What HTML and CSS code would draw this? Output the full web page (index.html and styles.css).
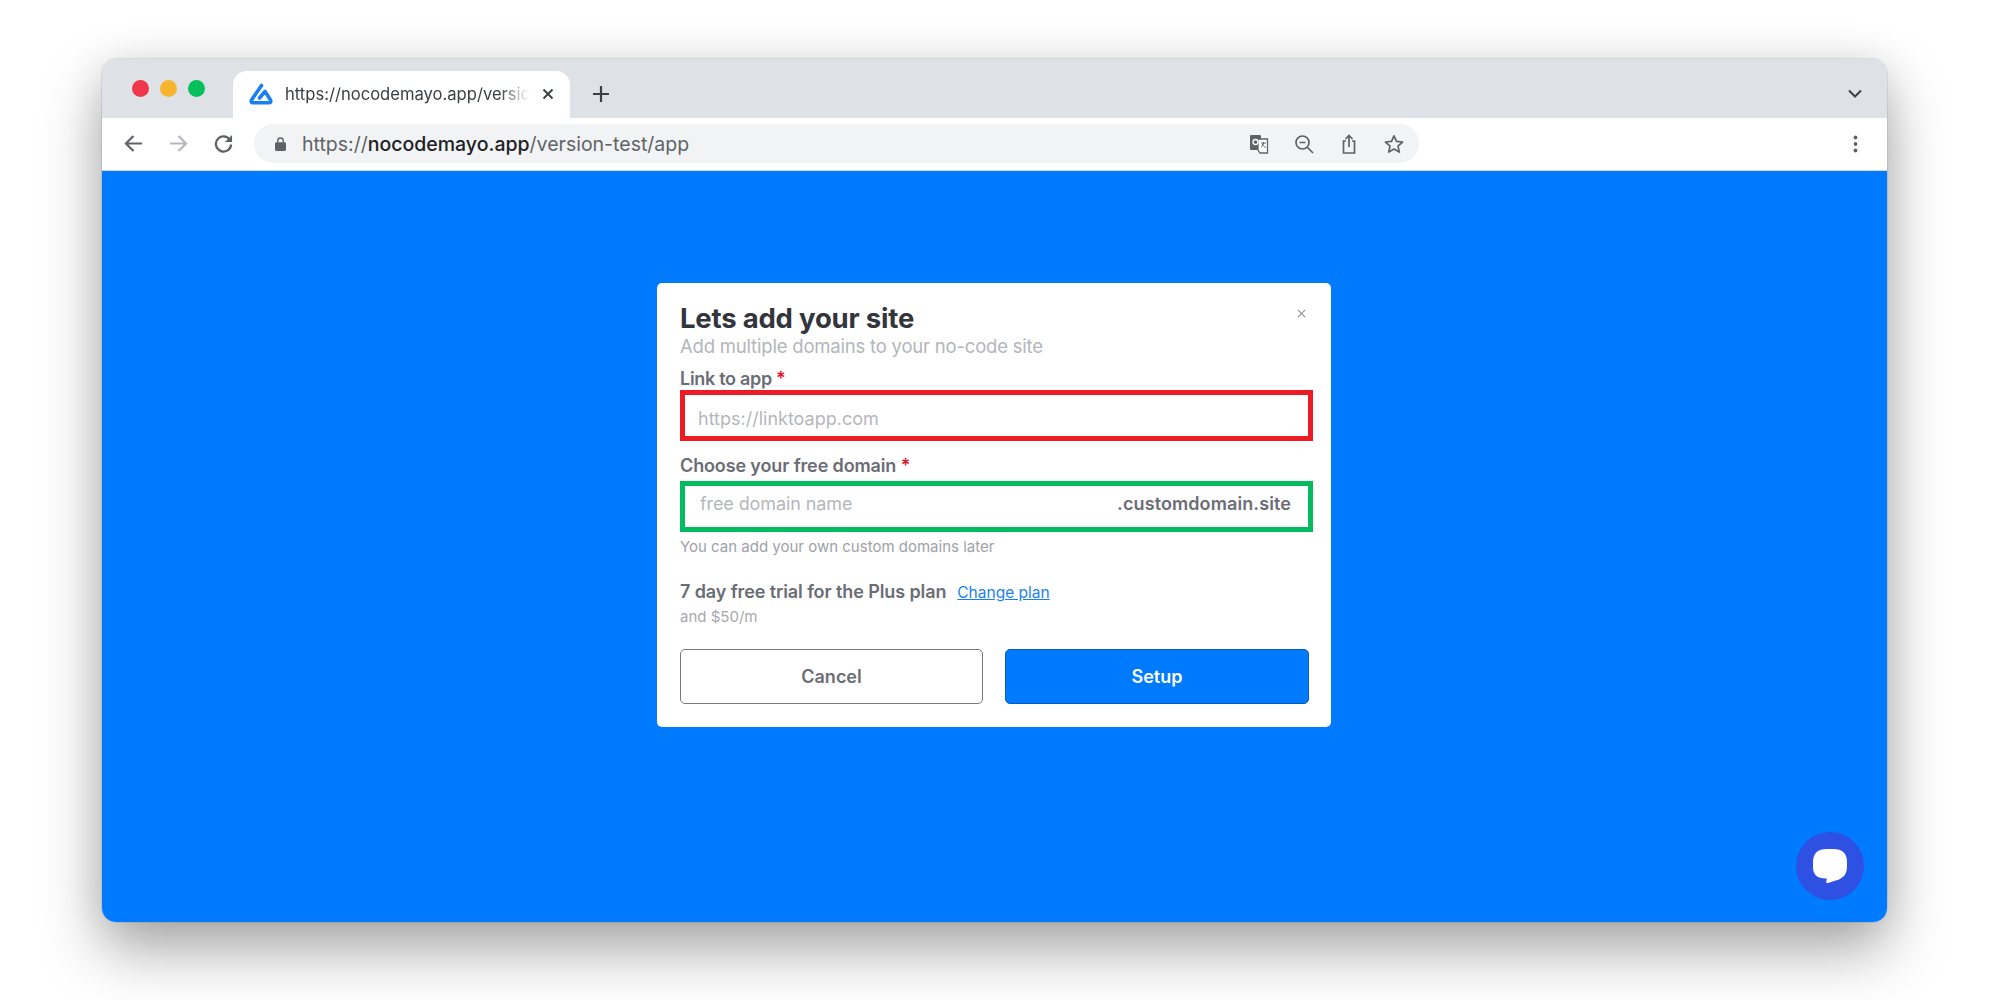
FILE: index.html
```html
<!DOCTYPE html>
<html lang="en">
<head>
<meta charset="utf-8">
<title>Lets add your site</title>
<link rel="stylesheet" href="styles.css">
</head>
<body>
<div class="window">
  <div class="tabbar">
    <div class="lights"><i class="light red"></i><i class="light yellow"></i><i class="light green"></i></div>
    <div class="tab">
      <svg class="favicon" viewBox="0 0 24 22" fill="none" stroke="#1a7ff0" stroke-width="3.600" stroke-linejoin="round" stroke-linecap="round"><path d="M12.500 2.500 2.500 17q-1 2.800 1.500 2.800h16q2.500 0 1.500-2.800L16 8.500 10.500 15"/></svg>
      <span class="tab-title">https://nocodemayo.app/version-test/app</span>
      <svg class="tab-close" viewBox="0 0 12 12" stroke="#3c4043" stroke-width="1.900" fill="none"><path d="M1.500 1.500l9 9M10.500 1.500l-9 9"/></svg>
    </div>
    <svg class="plus" viewBox="0 0 16 16" stroke="#3c4043" stroke-width="2.200" fill="none"><path d="M8 0v16M0 8h16"/></svg>
    <svg class="chevron" viewBox="0 0 14 10" stroke="#3c4043" stroke-width="2" fill="none"><path d="M1 1.500l6 6 6-6"/></svg>
  </div>
  <div class="toolbar">
    <svg class="nav" viewBox="0 0 20 20" stroke="#5f6368" stroke-width="2.300" fill="none"><path d="M19 10H2M10 2l-8 8 8 8"/></svg>
    <svg class="nav nav-off" viewBox="0 0 20 20" stroke="#b4b7bb" stroke-width="2.300" fill="none"><path d="M1 10h17M10 2l8 8-8 8"/></svg>
    <svg class="nav" viewBox="0 0 20 20" fill="none"><path d="M16.600 6A8 8 0 1 0 18 11" stroke="#5f6368" stroke-width="2.400"/><path d="M19 1v7.500h-7.500z" fill="#5f6368"/></svg>
    <div class="omnibox">
      <svg class="lock" viewBox="0 0 12 15"><path d="M3 6V4a3 3 0 0 1 6 0v2" fill="none" stroke="#5f6368" stroke-width="1.500"/><rect y="5.500" width="12" height="9.500" rx="1.500" fill="#5f6368"/></svg>
      <span class="url">https://<b>nocodemayo.app</b>/version-test/app</span>
      <div class="omni-icons">
        <svg class="omni-icon" viewBox="0 0 20 20"><rect x="1" y="1" width="11" height="15" rx="1" fill="#5f6368"/><path d="M9 5h9.500v14H11L9 16z" fill="#fff" stroke="#5f6368" stroke-width="1.300"/><circle cx="6.500" cy="8" r="2.500" fill="none" stroke="#fff" stroke-width="1.300"/><path d="M12 9h5M14.500 8v1c0 2-1.500 3.500-2.500 4M13 10c.5 1.500 2.500 3 4 3.500" fill="none" stroke="#5f6368" stroke-width="1"/></svg>
        <svg class="omni-icon" viewBox="0 0 20 20" fill="none" stroke="#5f6368" stroke-width="1.700"><circle cx="8.500" cy="8.500" r="6.500"/><path d="M13.500 13.500 19 19M5.500 8.500h6"/></svg>
        <svg class="omni-icon" viewBox="0 0 20 20" fill="none" stroke="#5f6368" stroke-width="1.700"><path d="M7 7H4.500v12h11V7H13M10 13V1.500M6.500 5 10 1.500 13.500 5"/></svg>
        <svg class="omni-icon" viewBox="0 0 20 20" fill="none" stroke="#5f6368" stroke-width="1.700" stroke-linejoin="round"><path d="M10 1.800l2.500 5.600 6.100.6-4.600 4.100 1.300 6-5.300-3.100-5.300 3.100 1.300-6L1.400 8l6.100-.6z"/></svg>
      </div>
    </div>
    <svg class="menu" viewBox="0 0 4 18" fill="#5f6368"><circle cx="2" cy="2.500" r="1.900"/><circle cx="2" cy="9" r="1.900"/><circle cx="2" cy="15.500" r="1.900"/></svg>
  </div>
  <main class="page">
    <section class="modal">
      <svg class="modal-close" viewBox="0 0 10 10" stroke="#8b8d94" stroke-width="1.200" fill="none"><path d="M1 1l8 8M9 1l-8 8"/></svg>
      <h1 class="title">Lets add your site</h1>
      <p class="subtitle">Add multiple domains to your no-code site</p>
      <label class="label label-first">Link to app <span class="req">*</span></label>
      <div class="field field-red"><span class="placeholder">https://linktoapp.com</span></div>
      <label class="label label-second">Choose your free domain <span class="req">*</span></label>
      <div class="field field-green"><span class="placeholder placeholder-domain">free domain name</span><span class="suffix">.customdomain.site</span></div>
      <p class="hint">You can add your own custom domains later</p>
      <div class="plan"><span class="plan-name">7 day free trial for the Plus plan</span><a class="plan-link" href="#">Change plan</a></div>
      <p class="price">and $50/m</p>
      <div class="actions">
        <button class="btn btn-cancel">Cancel</button>
        <button class="btn btn-setup">Setup</button>
      </div>
    </section>
    <div class="chat">
      <svg class="chat-icon" viewBox="0 0 34 34"><path d="M14 0h6q14 0 14 13v5q0 9-8 12.500l-11 3.500q-2 .5-1.800-1.200l.6-3.300Q0 30 0 18v-5Q0 0 14 0z" fill="#fff"/></svg>
    </div>
  </main>
</div>
</body>
</html>
```

FILE: styles.css
```css
* { box-sizing: border-box; }
html, body { margin: 0; height: 100%; background: #fff; overflow: hidden; }
body { padding: 59px 113px 78px 102px; font-family: Inter, "Liberation Sans", sans-serif; }

.window {
  height: 863px;
  border-radius: 14px;
  overflow: hidden;
  display: flex;
  flex-direction: column;
  box-shadow: 0 0 0 1px rgba(0,0,0,.08), 0 28px 60px rgba(0,0,0,.34), 0 0 40px rgba(0,0,0,.08);
}

.tabbar {
  height: 59px;
  flex: none;
  background: #dee1e6;
  display: flex;
  align-items: flex-end;
  padding-left: 30px;
  padding-right: 25px;
}
.lights { display: flex; gap: 11px; align-self: flex-start; margin-top: 21px; width: 101px; flex: none; }
.light { width: 17px; height: 17px; border-radius: 50%; display: block; }
.red { background: #f0364a radial-gradient(circle, #e0152b 35%, transparent 40%) 0 0 / 2px 2px; }
.yellow { background: #f7b52f; }
.green { background: #05bf5b; }

.tab {
  width: 337px;
  height: 47px;
  flex: none;
  background: #fff;
  border-radius: 14px 14px 0 0;
  display: flex;
  align-items: center;
  padding: 0 16px 2px 16px;
  position: relative;
}
.favicon { width: 24px; height: 22px; flex: none; }
.tab-title {
  margin-left: 12px;
  width: 244px;
  white-space: nowrap;
  overflow: hidden;
  font-size: 16.600px;
  color: #3c4043;
  -webkit-mask-image: linear-gradient(90deg, #000 88%, transparent 100%);
  mask-image: linear-gradient(90deg, #000 88%, transparent 100%);
}
.tab-close { width: 12px; height: 12px; margin-left: 13px; flex: none; }
.plus { width: 16px; height: 16px; margin: 0 0 16px 23px; flex: none; }
.chevron { width: 14px; height: 10px; margin: 0 0 19px auto; flex: none; }

.toolbar {
  height: 53px;
  flex: none;
  background: #fff;
  display: flex;
  align-items: center;
  padding: 0 29px 1px 22px;
  gap: 26px;
  border-bottom: 1px solid #cfd6df;
}
.nav { width: 19px; height: 19px; flex: none; }
.omnibox {
  width: 1165px;
  height: 39px;
  margin-left: -5px;
  margin-right: auto;
  flex: none;
  background: #f1f3f4;
  border-radius: 20px;
  display: flex;
  align-items: center;
  padding-left: 21px;
  padding-right: 15px;
}
.lock { width: 11px; height: 14px; flex: none; }
.url { margin-left: 16px; font-size: 19.500px; color: #5f6368; white-space: nowrap; }
.url b { font-weight: 500; color: #202124; }
.omni-icons { margin-left: auto; display: flex; gap: 25px; align-items: center; }
.omni-icon { width: 20px; height: 20px; flex: none; }
.menu { width: 5px; height: 18px; flex: none; }

.page {
  flex: 1;
  background: #007bff;
  position: relative;
  padding-top: 112px;
  display: flex;
  justify-content: flex-start;
  padding-left: 555px;
}
.modal {
  width: 674px;
  height: 444px;
  background: #fff;
  border-radius: 5px;
  padding: 20px 22px 0 23px;
  position: relative;
  color: #33353d;
}
.modal-close { position: absolute; top: 26px; left: 640px; width: 9px; height: 9px; }
.title { margin: 0; font-size: 27.500px; line-height: 30px; font-weight: 700; letter-spacing: -.2px; color: #33353d; }
.subtitle { margin: 1px 0 0; font-size: 18.500px; line-height: 24px; color: #b3b5ba; letter-spacing: -.2px; white-space: nowrap; }
.label { display: block; font-size: 18px; line-height: 22px; font-weight: 600; color: #6b6d75; letter-spacing: -.13px; }
.label-first { margin-top: 10px; letter-spacing: -.3px; }
.label-second { margin-top: 14px; }
.req { color: #e0162b; }
.field {
  width: 633px;
  height: 51px;
  border: 5px solid;
  display: flex;
  align-items: center;
  background: #fff;
}
.field-red { border-color: #ed1c24; padding-top: 6px; }
.field-green { border-color: #04bc60; margin-top: 4px; justify-content: space-between; padding-bottom: 6px; }
.placeholder { font-size: 18px; color: #b5b7bb; margin-left: 13px; }
.placeholder-domain { margin-left: 15px; letter-spacing: -.1px; }
.suffix { font-size: 18px; font-weight: 600; color: #6b6d75; margin-right: 17px; letter-spacing: .1px; }
.hint { margin: 6px 0 0; font-size: 15px; line-height: 18px; color: #a0a2a8; }
.plan { display: flex; align-items: baseline; margin-top: 25px; }
.plan-name { font-size: 18px; line-height: 22px; font-weight: 600; color: #6b6d75; letter-spacing: -.1px; }
.plan-link { margin-left: 11px; font-size: 15.500px; color: #1a7ff0; }
.price { margin: 5px 0 0; font-size: 15px; line-height: 18px; color: #a7a9ae; }
.actions { display: flex; gap: 22px; margin-top: 23px; }
.btn {
  width: 303px;
  height: 55px;
  border-radius: 5px;
  font: 600 18px Inter, "Liberation Sans", sans-serif;
}
.btn-cancel { background: #fff; border: 1.500px solid #76787e; color: #6b6d75; }
.btn-setup { width: 304px; background: #007bff; border: 1.500px solid #0a5bb5; color: #fff; }

.chat {
  position: absolute;
  right: 23px;
  bottom: 22px;
  width: 68px;
  height: 68px;
  border-radius: 50%;
  background: #2e50e3;
  display: flex;
  align-items: center;
  justify-content: center;
}
.chat-icon { width: 34px; height: 34px; }
```
